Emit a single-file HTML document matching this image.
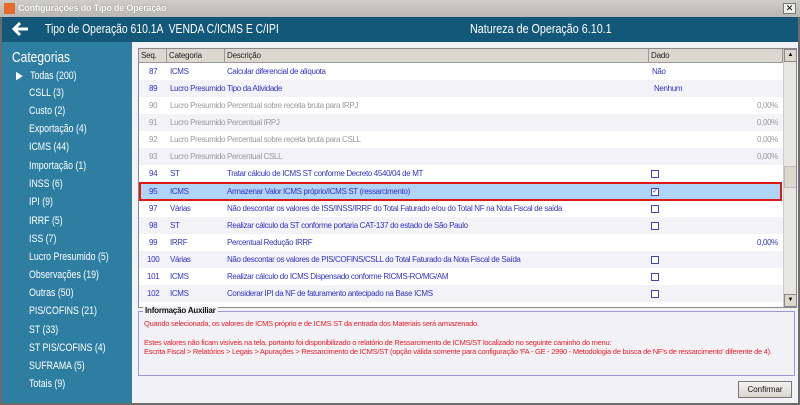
<!DOCTYPE html>
<html><head><meta charset="utf-8"><style>
*{margin:0;padding:0;box-sizing:border-box}
body{width:800px;height:405px;overflow:hidden;background:#6b6b6b;font-family:"Liberation Sans","DejaVu Sans",sans-serif;position:relative}
.a{position:absolute}
.n{transform:scaleX(0.8);transform-origin:left center;white-space:nowrap}
#tb{left:0;top:0;width:800px;height:17px;background:linear-gradient(#cfcdca,#b9b7b3);}
#tb span{position:absolute;left:18px;top:3px;font-size:9px;font-weight:bold;color:#fff;text-shadow:0 0 1px #666;letter-spacing:-0.2px}
#hdr{left:2px;top:17px;width:796px;height:25px;background:#135878;color:#fff;font-size:12.5px}
#side{left:2px;top:42px;width:130px;height:361px;background:#2e7ea2;color:#fff}
#side .c{position:absolute;left:10px;top:7px;font-size:15px}
#side .i{position:absolute;left:27px;font-size:11px;white-space:nowrap}
#main{left:132px;top:42px;width:666px;height:361px;background:#f1f1f6}
#grid{left:138px;top:48px;width:659px;height:260px;background:#fff;border:1px solid #888;overflow:hidden}
.h{position:absolute;top:0;height:14px;background:#dcd8d0;border-right:1px solid #999;border-bottom:1px solid #999;font-size:8px;line-height:13px;padding-left:2px;color:#222;letter-spacing:-0.2px}
.r{position:absolute;left:0;width:644px;height:17px;font-size:8px;line-height:17px;color:#3434c0;white-space:nowrap;letter-spacing:-0.35px}
.r span{position:absolute}
.r.g{color:#9a9a9a}
.r.s{background:#f2f2f7}
.cb{display:inline-block;width:8px;height:8px;border:1px solid #4444b0;background:#fff;vertical-align:middle}
#info{left:138px;top:311px;width:657px;height:65px;border:1px solid #9a9ad0;font-size:7.5px;color:#e8202a;line-height:10px;letter-spacing:-0.25px}
</style></head><body>
<div id="tb" class="a"><div class="a" style="left:4px;top:3px;width:11px;height:11px;background:#e46b2a"></div><span>Configurações do Tipo de Operação</span>
<div class="a" style="left:783px;top:3px;width:13px;height:11px;border:1px solid #777;background:#eee;font-size:9px;line-height:9px;text-align:center;color:#000">✕</div></div>
<div id="hdr" class="a">
<svg class="a" style="left:9px;top:4px" width="18" height="16" viewBox="0 0 18 16"><path d="M17 8H3M9 2L3 8l6 6" stroke="#fff" stroke-width="3" fill="none"/></svg>
<div class="a n" style="left:43px;top:5px;transform:scaleX(0.83)">Tipo de Operação 610.1A &nbsp;VENDA C/ICMS E C/IPI</div>
<div class="a n" style="left:468px;top:5px;transform:scaleX(0.86)">Natureza de Operação 6.10.1</div></div>
<div id="side" class="a"><div class="c n">Categorias</div>
<div class="i n" style="left:14px;top:27px">▶ &nbsp;&nbsp;Todas (200)</div>
<div class="i n" style="top:45px">CSLL (3)</div>
<div class="i n" style="top:63px">Custo (2)</div>
<div class="i n" style="top:81px">Exportação (4)</div>
<div class="i n" style="top:99px">ICMS (44)</div>
<div class="i n" style="top:118px">Importação (1)</div>
<div class="i n" style="top:136px">INSS (6)</div>
<div class="i n" style="top:154px">IPI (9)</div>
<div class="i n" style="top:173px">IRRF (5)</div>
<div class="i n" style="top:191px">ISS (7)</div>
<div class="i n" style="top:209px">Lucro Presumido (5)</div>
<div class="i n" style="top:227px">Observações (19)</div>
<div class="i n" style="top:245px">Outras (50)</div>
<div class="i n" style="top:263px">PIS/COFINS (21)</div>
<div class="i n" style="top:282px">ST (33)</div>
<div class="i n" style="top:300px">ST PIS/COFINS (4)</div>
<div class="i n" style="top:318px">SUFRAMA (5)</div>
<div class="i n" style="top:336px">Totais (9)</div>
</div>
<div id="main" class="a"></div>
<div id="grid" class="a">
<div class="h" style="left:0;width:28px">Seq.</div>
<div class="h" style="left:28px;width:58px">Categoria</div>
<div class="h" style="left:86px;width:424px">Descrição</div>
<div class="h" style="left:510px;width:134px">Dado</div>
<div class="a" style="left:644px;top:0;width:14px;height:260px;background:#e8e6e2;border-left:1px solid #ccc"></div>
<div class="a" style="left:645px;top:0;width:13px;height:13px;background:#dcd8d0;border:1px solid #888;font-size:6px;text-align:center;line-height:11px">▲</div>
<div class="a" style="left:645px;top:117px;width:13px;height:22px;background:#dcd8d0;border:1px solid #bbb"></div>
<div class="a" style="left:645px;top:245px;width:13px;height:13px;background:#dcd8d0;border:1px solid #888;font-size:6px;text-align:center;line-height:11px">▼</div>
<div class="r" style="top:14px"><span style="left:10px">87</span><span style="left:31px">ICMS</span><span style="left:88px">Calcular diferencial de alíquota</span><span style="left:513px">Não</span></div>
<div class="r s" style="top:31px"><span style="left:10px">89</span><span style="left:31px">Lucro Presumido</span><span style="left:88px">Tipo da Atividade</span><span style="left:515px">Nenhum</span></div>
<div class="r g" style="top:48px"><span style="left:10px">90</span><span style="left:31px">Lucro Presumido</span><span style="left:88px">Percentual sobre receita bruta para IRPJ</span><span style="left:618px">0,00%</span></div>
<div class="r g s" style="top:65px"><span style="left:10px">91</span><span style="left:31px">Lucro Presumido</span><span style="left:88px">Percentual IRPJ</span><span style="left:618px">0,00%</span></div>
<div class="r g" style="top:82px"><span style="left:10px">92</span><span style="left:31px">Lucro Presumido</span><span style="left:88px">Percentual sobre receita bruta para CSLL</span><span style="left:618px">0,00%</span></div>
<div class="r g s" style="top:99px"><span style="left:10px">93</span><span style="left:31px">Lucro Presumido</span><span style="left:88px">Percentual CSLL</span><span style="left:618px">0,00%</span></div>
<div class="r" style="top:116px"><span style="left:10px">94</span><span style="left:31px">ST</span><span style="left:88px">Tratar cálculo de ICMS ST conforme Decreto 4540/04 de MT</span><span style="left:512px"><i class="cb"></i></span></div>
<div class="r" style="top:133px;background:#b0d4f6;border:2px solid #e01818;height:19px;line-height:15px;width:643px"><span style="left:8px">95</span><span style="left:29px">ICMS</span><span style="left:86px">Armazenar Valor ICMS próprio/ICMS ST (ressarcimento)</span><span style="left:510px"><i class="cb" style="position:relative;text-align:center;line-height:6px;font-size:7px;font-style:normal">✓</i></span></div>
<div class="r" style="top:151px"><span style="left:10px">97</span><span style="left:31px">Várias</span><span style="left:88px">Não descontar os valores de ISS/INSS/IRRF do Total Faturado e/ou do Total NF na Nota Fiscal de saída</span><span style="left:512px"><i class="cb"></i></span></div>
<div class="r s" style="top:168px"><span style="left:10px">98</span><span style="left:31px">ST</span><span style="left:88px">Realizar cálculo da ST conforme portaria CAT-137 do estado de São Paulo</span><span style="left:512px"><i class="cb"></i></span></div>
<div class="r" style="top:185px"><span style="left:10px">99</span><span style="left:31px">IRRF</span><span style="left:88px">Percentual Redução IRRF</span><span style="left:618px">0,00%</span></div>
<div class="r s" style="top:202px"><span style="left:8px">100</span><span style="left:31px">Várias</span><span style="left:88px">Não descontar os valores de PIS/COFINS/CSLL do Total Faturado da Nota Fiscal de Saída</span><span style="left:512px"><i class="cb"></i></span></div>
<div class="r" style="top:219px"><span style="left:8px">101</span><span style="left:31px">ICMS</span><span style="left:88px">Realizar cálculo do ICMS Dispensado conforme RICMS-RO/MG/AM</span><span style="left:512px"><i class="cb"></i></span></div>
<div class="r s" style="top:236px"><span style="left:8px">102</span><span style="left:31px">ICMS</span><span style="left:88px">Considerar IPI da NF de faturamento antecipado na Base ICMS</span><span style="left:512px"><i class="cb"></i></span></div>
</div>
<div id="info" class="a">
<div class="a" style="left:4px;top:-6px;background:#f1f1f6;color:#111;font-weight:bold;font-size:8px;padding:0 2px;letter-spacing:-0.2px">Informação Auxiliar</div>
<div class="a" style="left:5px;top:7px;white-space:nowrap">Quando selecionada, os valores de ICMS próprio e de ICMS ST da entrada dos Materiais será armazenado.</div>
<div class="a" style="left:5px;top:26px;white-space:nowrap">Estes valores não ficam visíveis na tela, portanto foi disponibilizado o relatório de Ressarcimento de ICMS/ST localizado no seguinte caminho do menu:</div>
<div class="a" style="left:5px;top:35px;white-space:nowrap">Escrita Fiscal &gt; Relatórios &gt; Legais &gt; Apurações &gt; Ressarcimento de ICMS/ST (opção válida somente para configuração 'FA - GE - 2990 - Metodologia de busca de NF's de ressarcimento' diferente de 4).</div>
</div>
<div class="a" style="left:738px;top:381px;width:54px;height:17px;background:linear-gradient(#f4f3f0,#d9d6cf);border:1px solid #777;font-size:8px;line-height:15px;text-align:center;color:#111">Confirmar</div>
</body></html>
